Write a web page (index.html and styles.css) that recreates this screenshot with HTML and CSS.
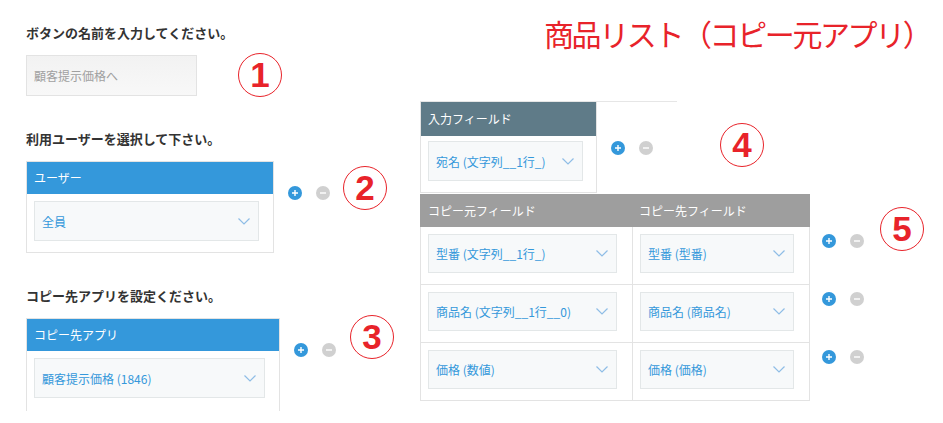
FILE: index.html
```html
<!DOCTYPE html>
<html lang="ja">
<head>
  <meta charset="UTF-8" />
  <meta name="viewport" content="width=device-width, initial-scale=1.0" />
  <title>商品リスト</title>
  <link rel="stylesheet" href="styles.css">
</head>
<body>

  <div class="page">

    <div class="left">
      <p class="label">ボタンの名前を入力してください。</p>
      <div class="row row-input">
        <div class="text-input">顧客提示価格へ</div>
        <div class="num num-1">1</div>
      </div>

      <p class="label label-2">利用ユーザーを選択して下さい。</p>
      <div class="row">
        <div class="panel panel-user">
          <div class="panel-head">ユーザー</div>
          <div class="panel-body">
            <div class="select">全員<svg class="chev" width="12" height="7" viewBox="0 0 12 7"><polyline points="0.5,0.5 6,6 11.5,0.5" /></svg></div>
          </div>
        </div>
        <div class="actions">
          <svg class="btn" width="14" height="14" viewBox="0 0 14 14"><circle cx="7" cy="7" r="7" fill="#3498db" /><path d="M4 7h6M7 4v6" stroke="#fff" stroke-width="1.4" /></svg>
          <svg class="btn" width="14" height="14" viewBox="0 0 14 14"><circle cx="7" cy="7" r="7" fill="#d0d0d0" /><path d="M4 7h6" stroke="#fff" stroke-width="1.4" /></svg>
        </div>
        <div class="num num-2">2</div>
      </div>

      <p class="label label-3">コピー先アプリを設定ください。</p>
      <div class="row">
        <div class="panel panel-app">
          <div class="panel-head">コピー先アプリ</div>
          <div class="panel-body">
            <div class="select">顧客提示価格 (1846)<svg class="chev" width="12" height="7" viewBox="0 0 12 7"><polyline points="0.5,0.5 6,6 11.5,0.5" /></svg></div>
          </div>
        </div>
        <div class="actions">
          <svg class="btn" width="14" height="14" viewBox="0 0 14 14"><circle cx="7" cy="7" r="7" fill="#3498db" /><path d="M4 7h6M7 4v6" stroke="#fff" stroke-width="1.4" /></svg>
          <svg class="btn" width="14" height="14" viewBox="0 0 14 14"><circle cx="7" cy="7" r="7" fill="#d0d0d0" /><path d="M4 7h6" stroke="#fff" stroke-width="1.4" /></svg>
        </div>
        <div class="num num-3">3</div>
      </div>
    </div>

    <div class="right">
      <h1 class="title">商品リスト（コピー元アプリ）</h1>
      <div class="rule"></div>

      <div class="row">
        <div class="panel panel-field">
          <div class="panel-head">入力フィールド</div>
          <div class="panel-body">
            <div class="select">宛名 (文字列__1行_)<svg class="chev" width="12" height="7" viewBox="0 0 12 7"><polyline points="0.5,0.5 6,6 11.5,0.5" /></svg></div>
          </div>
        </div>
        <div class="actions actions-field">
          <svg class="btn" width="14" height="14" viewBox="0 0 14 14"><circle cx="7" cy="7" r="7" fill="#3498db" /><path d="M4 7h6M7 4v6" stroke="#fff" stroke-width="1.4" /></svg>
          <svg class="btn" width="14" height="14" viewBox="0 0 14 14"><circle cx="7" cy="7" r="7" fill="#d0d0d0" /><path d="M4 7h6" stroke="#fff" stroke-width="1.4" /></svg>
        </div>
        <div class="num num-4">4</div>
      </div>

      <div class="row">
        <div class="map">
          <div class="map-row map-head">
            <div class="cell cell-src">コピー元フィールド</div>
            <div class="cell cell-dst">コピー先フィールド</div>
          </div>
          <div class="map-row">
            <div class="cell cell-src"><div class="select">型番 (文字列__1行_)<svg class="chev" width="12" height="7" viewBox="0 0 12 7"><polyline points="0.5,0.5 6,6 11.5,0.5" /></svg></div></div>
            <div class="cell cell-dst"><div class="select">型番 (型番)<svg class="chev" width="12" height="7" viewBox="0 0 12 7"><polyline points="0.5,0.5 6,6 11.5,0.5" /></svg></div></div>
            <div class="actions actions-map">
              <svg class="btn" width="14" height="14" viewBox="0 0 14 14"><circle cx="7" cy="7" r="7" fill="#3498db" /><path d="M4 7h6M7 4v6" stroke="#fff" stroke-width="1.4" /></svg>
              <svg class="btn" width="14" height="14" viewBox="0 0 14 14"><circle cx="7" cy="7" r="7" fill="#d0d0d0" /><path d="M4 7h6" stroke="#fff" stroke-width="1.4" /></svg>
            </div>
          </div>
          <div class="map-row">
            <div class="cell cell-src"><div class="select">商品名 (文字列__1行__0)<svg class="chev" width="12" height="7" viewBox="0 0 12 7"><polyline points="0.5,0.5 6,6 11.5,0.5" /></svg></div></div>
            <div class="cell cell-dst"><div class="select">商品名 (商品名)<svg class="chev" width="12" height="7" viewBox="0 0 12 7"><polyline points="0.5,0.5 6,6 11.5,0.5" /></svg></div></div>
            <div class="actions actions-map">
              <svg class="btn" width="14" height="14" viewBox="0 0 14 14"><circle cx="7" cy="7" r="7" fill="#3498db" /><path d="M4 7h6M7 4v6" stroke="#fff" stroke-width="1.4" /></svg>
              <svg class="btn" width="14" height="14" viewBox="0 0 14 14"><circle cx="7" cy="7" r="7" fill="#d0d0d0" /><path d="M4 7h6" stroke="#fff" stroke-width="1.4" /></svg>
            </div>
          </div>
          <div class="map-row">
            <div class="cell cell-src"><div class="select">価格 (数値)<svg class="chev" width="12" height="7" viewBox="0 0 12 7"><polyline points="0.5,0.5 6,6 11.5,0.5" /></svg></div></div>
            <div class="cell cell-dst"><div class="select">価格 (価格)<svg class="chev" width="12" height="7" viewBox="0 0 12 7"><polyline points="0.5,0.5 6,6 11.5,0.5" /></svg></div></div>
            <div class="actions actions-map">
              <svg class="btn" width="14" height="14" viewBox="0 0 14 14"><circle cx="7" cy="7" r="7" fill="#3498db" /><path d="M4 7h6M7 4v6" stroke="#fff" stroke-width="1.4" /></svg>
              <svg class="btn" width="14" height="14" viewBox="0 0 14 14"><circle cx="7" cy="7" r="7" fill="#d0d0d0" /><path d="M4 7h6" stroke="#fff" stroke-width="1.4" /></svg>
            </div>
          </div>
        </div>
        <div class="num num-5">5</div>
      </div>
    </div>

  </div>

</body>
</html>
```

FILE: styles.css
```css
body {
  font-family: "Noto Sans CJK JP", "Noto Sans", sans-serif;
  background: #fff;
  color: #333;
  margin: 0;
  padding: 0;
  font-size: 12px;
}
.page {
  display: flex;
  width: 943px;
  height: 423px;
  overflow: hidden;
}
.left {
  width: 420px;
  padding: 25px 0 0 26px;
  box-sizing: border-box;
}
.right {
  flex: 1;
}
.row {
  display: flex;
  align-items: flex-start;
}
.label {
  margin: 0;
  font-size: 13px;
  font-weight: bold;
  line-height: 16px;
  color: #333;
}
.label-2 {
  margin-top: 34px;
}
.label-3 {
  margin-top: 35px;
}
.row-input {
  margin-top: 12px;
  align-items: center;
}
.text-input {
  width: 171px;
  height: 41px;
  box-sizing: border-box;
  padding-left: 7px;
  line-height: 39px;
  color: #a0a0a0;
  background: linear-gradient(#f2f2f2, #f8f8f8);
  border: 1px solid #e3e3e3;
}

/* panels */
.panel {
  border: 1px solid #e3e3e3;
  box-sizing: border-box;
  margin-top: 14px;
}
.panel-head {
  height: 32px;
  line-height: 32px;
  padding-left: 7px;
  color: #fff;
  background: #3498db;
}
.panel-body {
  padding: 7px 14px 11px 7px;
}
.panel-user {
  width: 248px;
}
.panel-app {
  width: 254px;
  margin-top: 14px;
  border-bottom: none;
}
.panel-app .panel-body {
  padding-bottom: 13px;
}
.panel-field {
  width: 177px;
  margin-top: 0;
  border-top: none;
}
.panel-field .panel-head {
  height: 34px;
  line-height: 34px;
  background: #5f7b88;
}
.panel-field .panel-body {
  padding: 5px 13px 11px 7px;
}

.select {
  display: flex;
  align-items: center;
  justify-content: space-between;
  height: 40px;
  box-sizing: border-box;
  padding: 0 8px 0 7px;
  color: #3498db;
  background: #f7f9fa;
  border: 1px solid #e3e7e8;
  white-space: nowrap;
}
.chev polyline {
  fill: none;
  stroke: #8fbde6;
  stroke-width: 1.2;
}

/* plus / minus */
.actions {
  display: flex;
  gap: 14px;
  margin: 39px 0 0 14px;
}
.actions-field {
  margin-top: 39px;
}
.actions-map {
  margin: 7px 0 0 12px;
}
.btn {
  display: block;
}

/* circled numbers */
.num {
  width: 44px;
  height: 44px;
  box-sizing: border-box;
  border: 1.5px solid #e8232a;
  border-radius: 50%;
  color: #e8232a;
  font-family: "Liberation Sans", Arial, sans-serif;
  font-weight: bold;
  font-size: 35px;
  line-height: 41px;
  text-align: center;
}
.num-1 {
  margin-left: 41px;
}
.num-2 {
  margin: 19px 0 0 13px;
}
.num-3 {
  margin: 11px 0 0 14px;
}
.num-4 {
  margin: 21px 0 0 67px;
}
.num-5 {
  margin: 14px 0 0 16px;
}

/* right side */
.title {
  margin: 17px 0 0 124px;
  font-size: 30px;
  font-weight: normal;
  line-height: 32px;
  letter-spacing: -2.4px;
  color: #e8232a;
  white-space: nowrap;
}
.rule {
  width: 257px;
  height: 1px;
  margin-top: 52px;
  background: #e6e6e6;
}
.map {
  margin-top: 1px;
}
.map-row {
  display: flex;
  align-items: flex-start;
}
.cell {
  box-sizing: border-box;
  height: 58px;
  padding: 7px 15px 0 7px;
  border-left: 1px solid #e3e3e3;
  border-bottom: 1px solid #e3e3e3;
}
.cell-src {
  width: 212px;
}
.cell-dst {
  width: 178px;
  border-right: 1px solid #e3e3e3;
}
.cell .select {
  height: 39px;
}
.map-head .cell {
  height: 33px;
  line-height: 33px;
  padding-top: 0;
  color: #fff;
  background: #9e9e9e;
  border-color: #9e9e9e;
}
.map-head .cell-dst {
  padding-left: 6px;
}
```
